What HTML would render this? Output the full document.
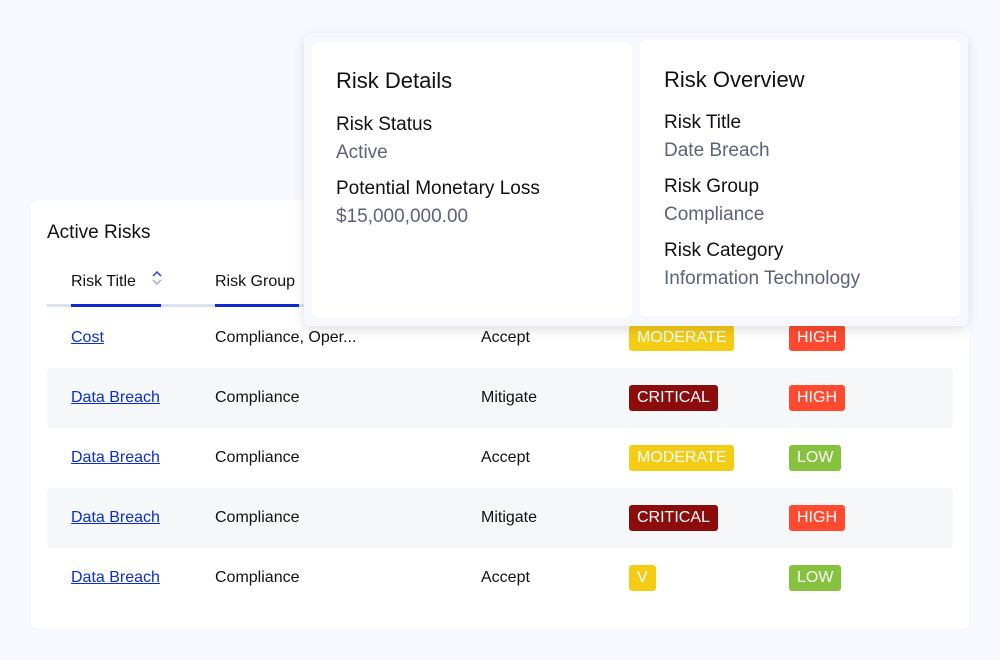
<!DOCTYPE html>
<html><head><style>
*{margin:0;padding:0;box-sizing:border-box}
body{width:1000px;height:660px;background:#f8f9fe;font-family:"Liberation Sans",sans-serif;position:relative;overflow:hidden;color:#111}
.card{position:absolute;left:31px;top:200px;width:938px;height:428px;background:#fff;border-radius:6px}
.abs{position:absolute;white-space:nowrap}
.row{position:absolute;left:47px;width:906px;height:60px}
.stripe{background:#f6f7f9;border-radius:4px}
.t{position:absolute;font-size:16px;top:50%;transform:translateY(-50%)}
a{color:#0b2fd1;text-decoration:underline}
.b{position:absolute;top:17px;height:26px;line-height:26px;padding:0 8px;border-radius:3px;color:#fff;font-size:16px}
.mod{background:#f4cc14}.crit{background:#8c0c0c}.high{background:#ff4a2f}.low{background:#86c23d}
.pop{position:absolute;left:304px;top:33px;width:664px;height:293px;background:#f7f8fd;border-radius:6px;box-shadow:0 4px 12px rgba(0,0,0,.12)}
.in{position:absolute;background:#fff;border-radius:6px}
.h{font-size:22px;color:#111}
.l{font-size:19px;color:#111}
.v{font-size:19px;color:#5e6180}
</style></head><body>
<div class="card"></div>
<div class="abs" style="left:47px;top:222px;font-size:19px">Active Risks</div>
<div class="abs" style="left:71px;top:273px;font-size:16px">Risk Title</div>
<svg class="abs" style="left:151px;top:270px" width="12" height="16" viewBox="0 0 12 16"><path d="M2 6L6 2L10 6" stroke="#3a57d6" stroke-width="1.6" fill="none"/><path d="M2 10L6 14L10 10" stroke="#a9b4e8" stroke-width="1.6" fill="none"/></svg>
<div class="abs" style="left:215px;top:273px;font-size:16px">Risk Group</div>
<div class="abs" style="left:47px;top:304px;width:260px;height:3px;background:#dde2f2"></div>
<div class="abs" style="left:71px;top:304px;width:90px;height:3px;background:#0a2ad6"></div>
<div class="abs" style="left:215px;top:304px;width:84px;height:3px;background:#0a2ad6"></div>

<div class="row" style="top:308px"><span class="t" style="left:24px"><a>Cost</a></span><span class="t" style="left:168px">Compliance, Oper...</span><span class="t" style="left:434px">Accept</span><span class="b mod" style="left:582px">MODERATE</span><span class="b high" style="left:742px">HIGH</span></div>
<div class="row stripe" style="top:368px"><span class="t" style="left:24px"><a>Data Breach</a></span><span class="t" style="left:168px">Compliance</span><span class="t" style="left:434px">Mitigate</span><span class="b crit" style="left:582px">CRITICAL</span><span class="b high" style="left:742px">HIGH</span></div>
<div class="row" style="top:428px"><span class="t" style="left:24px"><a>Data Breach</a></span><span class="t" style="left:168px">Compliance</span><span class="t" style="left:434px">Accept</span><span class="b mod" style="left:582px">MODERATE</span><span class="b low" style="left:742px">LOW</span></div>
<div class="row stripe" style="top:488px"><span class="t" style="left:24px"><a>Data Breach</a></span><span class="t" style="left:168px">Compliance</span><span class="t" style="left:434px">Mitigate</span><span class="b crit" style="left:582px">CRITICAL</span><span class="b high" style="left:742px">HIGH</span></div>
<div class="row" style="top:548px"><span class="t" style="left:24px"><a>Data Breach</a></span><span class="t" style="left:168px">Compliance</span><span class="t" style="left:434px">Accept</span><span class="b mod" style="left:582px">V</span><span class="b low" style="left:742px">LOW</span></div>

<div class="pop">
 <div class="in" style="left:8px;top:9px;width:320px;height:276px"></div>
 <div class="in" style="left:336px;top:7px;width:320px;height:276px"></div>
</div>
<div class="abs h" style="left:336px;top:68px">Risk Details</div>
<div class="abs l" style="left:336px;top:114px">Risk Status</div>
<div class="abs v" style="left:336px;top:142px">Active</div>
<div class="abs l" style="left:336px;top:178px">Potential Monetary Loss</div>
<div class="abs v" style="left:336px;top:206px">$15,000,000.00</div>
<div class="abs h" style="left:664px;top:67px">Risk Overview</div>
<div class="abs l" style="left:664px;top:112px">Risk Title</div>
<div class="abs v" style="left:664px;top:140px">Date Breach</div>
<div class="abs l" style="left:664px;top:176px">Risk Group</div>
<div class="abs v" style="left:664px;top:204px">Compliance</div>
<div class="abs l" style="left:664px;top:240px">Risk Category</div>
<div class="abs v" style="left:664px;top:268px">Information Technology</div>
</body></html>
